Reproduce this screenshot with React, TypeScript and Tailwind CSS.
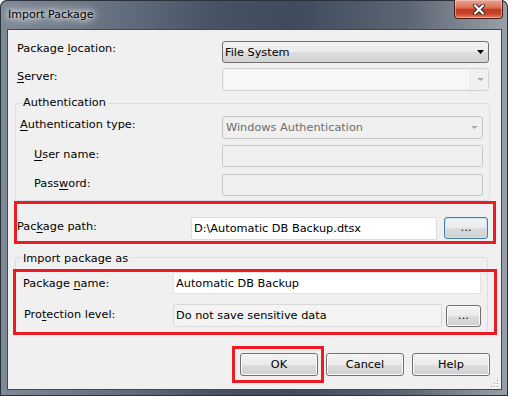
import React from "react";

const font = "font-['DejaVu_Sans',sans-serif] text-[11.3px] leading-[13px] text-black";

function U({ children }: { children: React.ReactNode }) {
  return <span className="underline decoration-1 underline-offset-[2px]">{children}</span>;
}

function Arrow({ color, h = 4 }: { color: string; h?: number }) {
  return (
    <svg width="7" height={h} viewBox={`0 0 7 ${h}`} className="shrink-0">
      <path d={`M0 0H7L3.5 ${h}Z`} fill={color} />
    </svg>
  );
}

function WinBtn({ className, children, hot }: { className: string; children: React.ReactNode; hot?: boolean }) {
  return (
    <div
      className={`flex items-center justify-center rounded-[3px] border ${
        hot
          ? "border-[#3c7fb1] shadow-[inset_0_0_0_1px_#c8e6f7]"
          : "border-[#707070] shadow-[inset_0_0_0_1px_#fbfbfb]"
      } bg-[linear-gradient(#f2f2f2,#ebebeb_50%,#dddddd_50%,#cfcfcf)] ${className}`}
    >
      {children}
    </div>
  );
}

export default function App() {
  return (
    <div
      className={`${font} relative w-[508px] h-[396px] overflow-hidden rounded-t-[7px] bg-[linear-gradient(90deg,#7f8a97_0%,#6b7685_18%,#475365_42%,#3f4b5d_58%,#5b6572_80%,#98a0a8_100%)] shadow-[inset_0_0_0_1px_#2b323c]`}
    >
      {/* title bar */}
      <div className="flex h-[29px] items-start">
        <div className="pl-[8px] pt-[8px] text-[11px] text-black [text-shadow:0_0_8px_#ffffff,0_0_12px_#ffffff,0_0_4px_#ffffff]">
          Import Package
        </div>
        <div className="ml-auto mr-[5px] flex h-[19px] w-[49px] items-center justify-center rounded-b-[4px] border border-t-0 border-[#47201a] bg-[linear-gradient(#e9a593,#d86c53_45%,#c23a1f_52%,#c84527_78%,#e5846a)] shadow-[inset_0_0_0_1px_rgba(255,220,210,0.45)]">
          <svg width="12" height="11" viewBox="0 0 12 11">
            <path d="M2 1.5L10 9.5M10 1.5L2 9.5" stroke="#3a2220" strokeWidth="4" strokeLinecap="round" />
            <path d="M2 1.5L10 9.5M10 1.5L2 9.5" stroke="#ffffff" strokeWidth="2.2" strokeLinecap="round" />
          </svg>
        </div>
      </div>

      {/* client area */}
      <div className="relative ml-[7px] flex h-[361px] w-[495px] flex-col border border-[#3d4859] bg-[#f0f0f0]">
        {/* Package location */}
        <div className="mt-[11px] flex h-[22px]">
          <div className="w-[214px] pl-[9px] pt-[1px]">
            Package <U>l</U>ocation:
          </div>
          <div className="flex h-[22px] w-[267px] items-center rounded-[3px] border border-[#707070] bg-[linear-gradient(#f2f2f2,#ebebeb_50%,#dddddd_50%,#d3d3d3)] pl-[2px] pr-[4px]">
            <span className="flex-1">File System</span>
            <Arrow color="#000000" />
          </div>
        </div>

        {/* Server */}
        <div className="mt-[5px] flex h-[23px]">
          <div className="w-[214px] pl-[9px] pt-[2px]">
            <U>S</U>erver:
          </div>
          <div className="flex h-[23px] w-[267px] items-center rounded-[3px] border border-[#d2d2d2] bg-[#f0f0f0] pr-[4px]">
            <div className="ml-[1px] h-[19px] w-[245px] bg-[#f7f7f7]" />
            <div className="flex flex-1 justify-end">
              <Arrow color="#a8a8a8" h={3} />
            </div>
          </div>
        </div>

        {/* Authentication group */}
        <div className="relative ml-[7px] mt-[12px] h-[98px] w-[475px] rounded-[3px] border border-[#d5dfe5] pt-[12px]">
          <span className="absolute left-[5px] top-[-8px] bg-[#f0f0f0] px-[2px]">Authentication</span>
          <div className="flex h-[23px]">
            <div className="w-[206px] pl-[4px] pt-[2px]">
              <U>A</U>uthentication type:
            </div>
            <div className="flex h-[23px] w-[261px] items-center rounded-[3px] border border-[#c6c6c6] bg-[#f0f0f0] pl-[3px] pr-[4px] text-[#6d6d6d]">
              <span className="flex-1">Windows Authentication</span>
              <Arrow color="#a8a8a8" h={3} />
            </div>
          </div>
          <div className="mt-[6px] flex h-[22px]">
            <div className="w-[206px] pl-[18px] pt-[3px]">
              <U>U</U>ser name:
            </div>
            <div className="h-[22px] w-[261px] rounded-[2px] border border-[#c9c9c9] bg-[#f0f0f0]" />
          </div>
          <div className="mt-[7px] flex h-[22px]">
            <div className="w-[206px] pl-[18px] pt-[3px]">
              Pass<U>w</U>ord:
            </div>
            <div className="h-[22px] w-[261px] rounded-[2px] border border-[#c9c9c9] bg-[#f0f0f0]" />
          </div>
        </div>

        {/* Package path */}
        <div className="mt-[16px] flex h-[23px]">
          <div className="w-[183px] pl-[9px] pt-[3px]">
            Pac<U>k</U>age path:
          </div>
          <div className="flex h-[23px] w-[246px] items-center rounded-[2px] border border-[#dcdcdc] bg-white pl-[2px]">
            D:\Automatic DB Backup.dtsx
          </div>
          <WinBtn hot className="ml-[7px] h-[22px] w-[44px] pb-[2px]">
            ...
          </WinBtn>
        </div>

        {/* Import package as group */}
        <div className="relative ml-[7px] mt-[17px] h-[76px] w-[473px] rounded-[3px] border border-[#d5dfe5] pt-[14px]">
          <span className="absolute left-[5px] top-[-6px] bg-[#f0f0f0] px-[2px]">Import package as</span>
          <div className="flex h-[22px]">
            <div className="w-[157px] pl-[7px] pt-[5px]">
              Package <U>n</U>ame:
            </div>
            <div className="flex h-[22px] w-[308px] items-center rounded-[2px] border border-[#e2e2e2] bg-white pl-[2px]">
              Automatic DB Backup
            </div>
          </div>
          <div className="mt-[10px] flex h-[23px]">
            <div className="w-[157px] pl-[8px] pt-[4px]">
              Pro<U>t</U>ection level:
            </div>
            <div className="flex h-[23px] w-[269px] items-center rounded-[2px] border border-[#d9d9d9] bg-[#f3f3f3] pl-[2px]">
              Do not save sensitive data
            </div>
            <WinBtn className="ml-[4px] mt-[1px] h-[22px] w-[35px] pb-[2px]">...</WinBtn>
          </div>
        </div>

        {/* buttons */}
        <div className="mt-[20px] flex justify-end gap-[8px] pr-[11px]">
          <WinBtn className="h-[23px] w-[78px]">OK</WinBtn>
          <WinBtn className="h-[23px] w-[78px]">Cancel</WinBtn>
          <WinBtn className="h-[23px] w-[78px]">Help</WinBtn>
        </div>

        {/* size grip */}
        <svg className="absolute bottom-[1px] right-[2px]" width="10" height="10" viewBox="0 0 10 10">
          {[
            [8, 2],
            [8, 5],
            [5, 5],
            [8, 8],
            [5, 8],
            [2, 8],
          ].map(([x, y], i) => (
            <g key={i}>
              <rect x={x} y={y} width="1" height="1" fill="#9a9a9a" />
              <rect x={x + 1} y={y + 1} width="1" height="1" fill="#ffffff" />
            </g>
          ))}
        </svg>
      </div>

      {/* red annotation boxes */}
      <div className="pointer-events-none absolute left-[14px] top-[201px] h-[43px] w-[482px] border-[3px] border-[#ed1c24]" />
      <div className="pointer-events-none absolute left-[13px] top-[269px] h-[66px] w-[484px] border-[3px] border-[#ed1c24]" />
      <div className="pointer-events-none absolute left-[232px] top-[346px] h-[37px] w-[92px] border-[3px] border-[#ed1c24]" />
    </div>
  );
}
